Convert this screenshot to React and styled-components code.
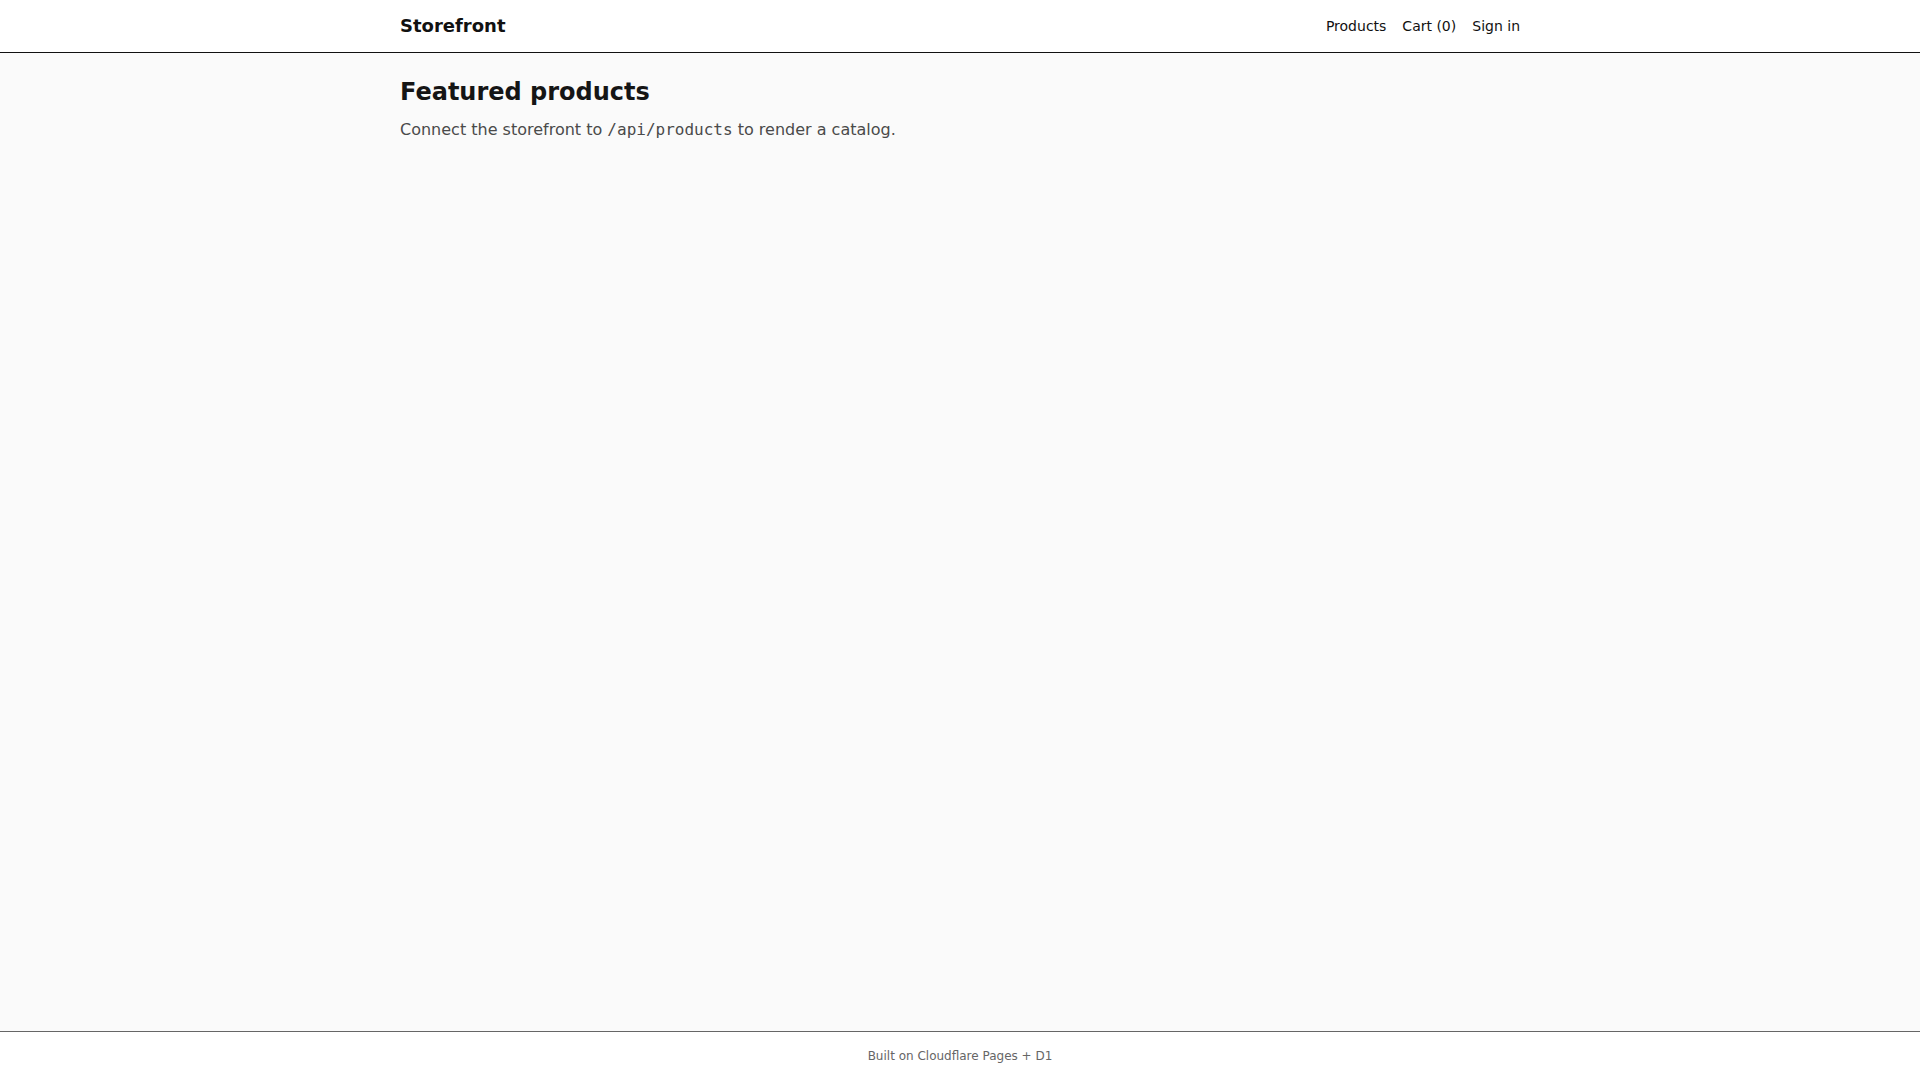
import React from 'react'
import styled, { createGlobalStyle } from 'styled-components'

const GlobalStyle = createGlobalStyle`
  html, body, #root {
    margin: 0;
    height: 100%;
  }
  body {
    font-family: "DejaVu Sans", "Noto Sans", sans-serif;
    background: #fafafa;
    color: #111;
  }
`

const Page = styled.div`
  min-height: 100vh;
  display: flex;
  flex-direction: column;
`

const Container = styled.div`
  max-width: 1120px;
  width: 100%;
  margin: 0 auto;
`

const Header = styled.header`
  background: #fff;
  border-bottom: 1px solid #111;
`

const HeaderInner = styled(Container)`
  display: flex;
  align-items: center;
  justify-content: space-between;
  padding: 15px 0 16px;
`

const Brand = styled.a`
  font-size: 18px;
  font-weight: 700;
  color: #111;
  text-decoration: none;
`

const Nav = styled.nav`
  display: flex;
  gap: 16px;
`

const NavLink = styled.a`
  font-size: 14px;
  color: #111;
  text-decoration: none;
`

const Main = styled.main`
  flex: 1;
  padding: 25px 0 24px;
`

const Title = styled.h1`
  font-size: 24px;
  margin: 0 0 14px;
  color: #151515;
`

const Lead = styled.p`
  font-size: 16px;
  color: #4a4a4a;
  margin: 0;
`

const Code = styled.code`
  font-family: "DejaVu Sans Mono", "Liberation Mono", monospace;
  font-size: 16px;
`

const Footer = styled.footer`
  background: #fff;
  color: #666;
  border-top: 1px solid currentColor;
  padding: 17px 0;
  text-align: center;
  font-size: 12px;
`

const App = () => {
  return (
    <Page>
      <GlobalStyle />
      <Header>
        <HeaderInner>
          <Brand href="#">Storefront</Brand>
          <Nav>
            <NavLink href="#">Products</NavLink>
            <NavLink href="#">Cart (0)</NavLink>
            <NavLink href="#">Sign in</NavLink>
          </Nav>
        </HeaderInner>
      </Header>
      <Main>
        <Container>
          <Title>Featured products</Title>
          <Lead>
            Connect the storefront to <Code>/api/products</Code> to render a catalog.
          </Lead>
        </Container>
      </Main>
      <Footer>Built on Cloudflare Pages + D1</Footer>
    </Page>
  )
}

export default App
